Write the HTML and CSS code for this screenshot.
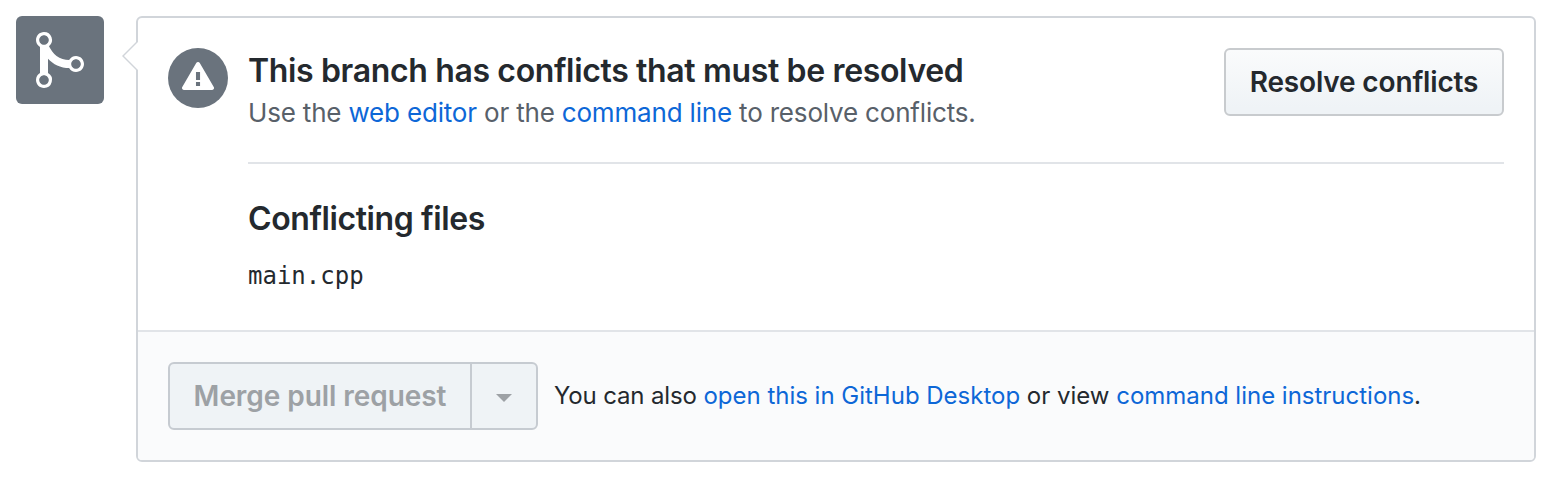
FILE: index.html
```html
<!DOCTYPE html>
<html lang="en">
<head>
<meta charset="utf-8">
<title>Merge conflicts</title>
<link rel="stylesheet" href="styles.css">
</head>
<body>
<div class="merge">
  <div class="merge-icon">
    <svg width="48" height="64" viewBox="0 0 12 16" fill="currentColor"><path fill-rule="evenodd" d="M10 7c-.73 0-1.38.41-1.73 1.02V8C7.22 7.98 6 7.64 5.14 6.98c-.75-.58-1.5-1.61-1.89-2.44A1.993 1.993 0 0 0 2 .99C.89.99 0 1.89 0 3a2 2 0 0 0 1 1.72v6.56c-.59.35-1 .99-1 1.72 0 1.11.89 2 2 2a1.993 1.993 0 0 0 1-3.72V7.67c.67.7 1.44 1.27 2.3 1.69.86.42 2.03.63 2.97.64v-.02c.36.61 1 1.02 1.73 1.02 1.11 0 2-.89 2-2 0-1.11-.89-2-2-2zm-6.8 6c0 .66-.55 1.2-1.2 1.2-.65 0-1.2-.55-1.2-1.2 0-.65.55-1.2 1.2-1.2.65 0 1.2.55 1.2 1.2zM2 4.2C1.34 4.2.8 3.65.8 3c0-.65.55-1.2 1.2-1.2.65 0 1.2.55 1.2 1.2 0 .65-.55 1.2-1.2 1.2zm8 6c-.66 0-1.2-.55-1.2-1.2 0-.65.55-1.2 1.2-1.2.65 0 1.2.55 1.2 1.2 0 .65-.55 1.2-1.2 1.2z"/></svg>
  </div>
  <div class="panel">
    <div class="status">
      <div class="status-icon">
        <svg width="32" height="32" viewBox="0 0 16 16" fill="currentColor"><path fill-rule="evenodd" d="M8.893 1.5c-.183-.31-.52-.5-.887-.5s-.703.19-.886.5L.138 13.499a.98.98 0 0 0 0 1.001c.193.31.53.501.886.501h13.964c.367 0 .704-.19.877-.5a1.03 1.03 0 0 0 .01-1.002L8.893 1.5zm.133 11.497H6.987v-2.003h2.039v2.003zm0-3.004H6.987V5.987h2.039v4.006z"/></svg>
      </div>
      <div class="status-body">
        <div class="status-head">
          <div class="status-text">
            <h3 class="title">This branch has conflicts that must be resolved</h3>
            <p class="meta">Use the <a class="link">web editor</a> or the <a class="link">command line</a> to resolve conflicts.</p>
          </div>
          <button class="btn resolve">Resolve conflicts</button>
        </div>
        <div class="files">
          <h3 class="title">Conflicting files</h3>
          <div class="file">main.cpp</div>
        </div>
      </div>
    </div>
    <div class="actions">
      <div class="btn-group">
        <button class="btn merge-btn" disabled>Merge pull request</button>
        <button class="btn caret-btn" disabled aria-label="Select merge method"><i class="caret"></i></button>
      </div>
      <p class="hint"><span class="lead">You can also</span> <a class="link">open this in GitHub Desktop</a> or view <a class="link">command line instructions</a>.</p>
    </div>
  </div>
</div>
</body>
</html>
```
FILE: styles.css
```css
* {
  box-sizing: border-box;
}

body {
  margin: 0;
  background: #fff;
  color: #24292e;
  font-family: Inter, "Liberation Sans", sans-serif;
}

.merge {
  display: flex;
  align-items: flex-start;
  gap: 32px;
  padding: 16px 16px 0;
}

.merge-icon {
  display: flex;
  align-items: center;
  justify-content: center;
  flex: none;
  width: 88px;
  height: 88px;
  border-radius: 6px;
  background: #6a737d;
  color: #fff;
}

.panel {
  position: relative;
  flex: 1;
  border: 2px solid #d1d5da;
  border-radius: 6px;
}

.panel::before,
.panel::after {
  content: "";
  position: absolute;
  top: 22px;
  left: -16px;
  border: 16px solid transparent;
  border-left-width: 0;
  border-right-color: #d1d5da;
}

.panel::after {
  left: -14px;
  border-right-color: #fff;
}

.status {
  display: flex;
  gap: 20px;
  height: 312px;
  padding: 30px;
}

.status-icon {
  display: flex;
  justify-content: center;
  flex: none;
  width: 60px;
  height: 60px;
  padding-top: 12px;
  border-radius: 50%;
  background: #6a737d;
  color: #fff;
}

.status-body {
  flex: 1;
}

.status-head {
  display: flex;
  justify-content: space-between;
  height: 116px;
  border-bottom: 2px solid #e1e4e8;
}

.title {
  margin: 0;
  font-size: 32px;
  font-weight: 600;
  line-height: 46px;
  letter-spacing: -0.35px;
}

.meta {
  margin: 0;
  color: #586069;
  font-size: 26px;
  line-height: 38px;
  letter-spacing: -0.18px;
}

.link {
  color: #0d67d7;
}

.btn {
  display: flex;
  align-items: center;
  justify-content: center;
  height: 68px;
  padding: 0;
  border: 2px solid #c6cbd1;
  border-radius: 6px;
  color: #24292e;
  font: 600 28px/40px Inter, "Liberation Sans", sans-serif;
}

.resolve {
  width: 280px;
  border-color: #c8cbce;
  background: linear-gradient(#fafbfc, #eff3f6 90%);
  letter-spacing: -0.16px;
}

.files {
  padding-top: 32px;
}

.files .title {
  letter-spacing: -0.4px;
}

.file {
  margin-top: 16px;
  font: 24px/36px "DejaVu Sans Mono", monospace;
}

.actions {
  display: flex;
  align-items: center;
  gap: 16px;
  height: 130px;
  padding: 0 30px;
  border-top: 2px solid #e1e4e8;
  border-radius: 0 0 4px 4px;
  background: #fafbfc;
}

.btn-group {
  display: flex;
}

.btn-group .btn {
  background: #eff3f6;
  color: #9da1a5;
}

.merge-btn {
  width: 304px;
  border-radius: 6px 0 0 6px;
  letter-spacing: -0.06px;
}

.caret-btn {
  width: 68px;
  margin-left: -2px;
  border-radius: 0 6px 6px 0;
}

.caret {
  margin-top: 4px;
  border: 8px solid transparent;
  border-top-color: currentColor;
  border-bottom-width: 0;
}

.hint {
  margin: 0;
  font-size: 24px;
  line-height: 36px;
  letter-spacing: -0.01px;
}

.lead {
  letter-spacing: -0.15px;
}
```
